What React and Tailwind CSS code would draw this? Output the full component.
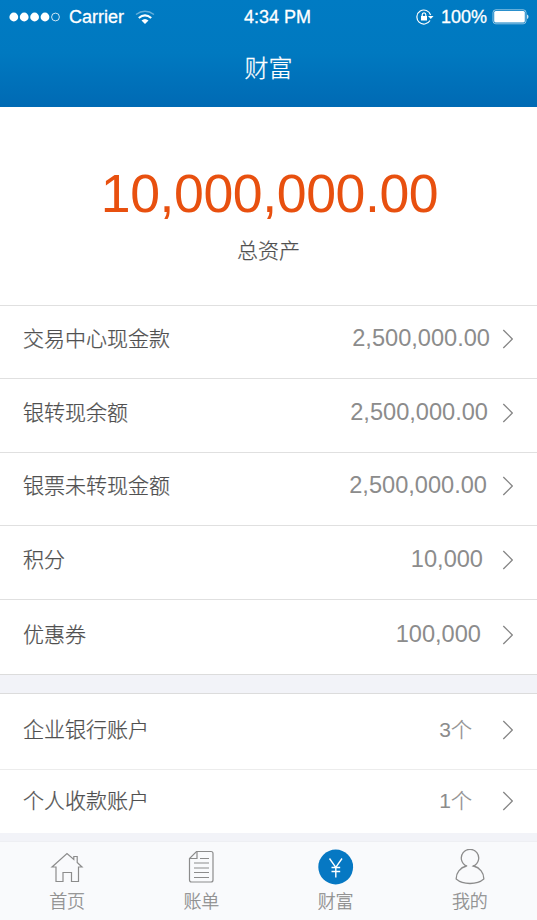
import React, { useState } from "react";

const assets = [
  { label: "交易中心现金款", value: "2,500,000.00", row: "h-[73px] pb-[7px]", gap: "mr-[12px]" },
  { label: "银转现余额", value: "2,500,000.00", row: "h-[74px] pb-[5px]", gap: "mr-[14px]" },
  { label: "银票未转现金额", value: "2,500,000.00", row: "h-[73px] pb-[6px]", gap: "mr-[15px]" },
  { label: "积分", value: "10,000", row: "h-[74px] pb-[6px]", gap: "mr-[19px]" },
  { label: "优惠券", value: "100,000", row: "h-[75px] pb-[4px]", gap: "mr-[21px]" },
];

const accounts = [
  { label: "企业银行账户", value: "3", row: "h-[76px] pb-[4px]" },
  { label: "个人收款账户", value: "1", row: "h-[64px] pb-[1px]" },
];

const Chevron = () => (
  <svg width="11" height="20" viewBox="0 0 11 20" fill="none" stroke="#858585" strokeWidth="1.3">
    <path d="M1.300 1 10.300 10 1.300 19" />
  </svg>
);

const HomeIcon = () => (
  <svg width="36" height="36" viewBox="0 0 36 36" fill="none" stroke="#8c8c8c" strokeWidth="1.2">
    <path d="M3 18 18 4.500l6.800 6V7.500h3.400v6L33 18h-3.500v14.500h-7v-9H14v9H7V18Z" />
  </svg>
);

const BillIcon = () => (
  <svg width="36" height="36" viewBox="0 0 36 36" fill="none" stroke="#8c8c8c" strokeWidth="1.2">
    <path d="M13.500 2.500H28q2 0 2 2v26.500q0 2-2 2H8.500q-2 0-2-2V9.500Z" />
    <path d="M14 3v6.500H6.500M17 9.500h9M11 14h15M11 19h15M11 23.500h15M11 28.500h15" />
  </svg>
);

const WealthIcon = () => (
  <svg width="36" height="36" viewBox="0 0 36 36" fill="none" stroke="#fff" strokeWidth="1.4">
    <circle cx="17.700" cy="18" r="17.400" fill="#0678c3" stroke="none" />
    <path d="M11.500 9.500 17.800 18.300l6.200-8.800M17.800 18v10.500M13.500 18.500h8.700M13.500 22.500h8.700" />
  </svg>
);

const UserIcon = () => (
  <svg width="36" height="36" viewBox="0 0 36 36" fill="none" stroke="#8c8c8c" strokeWidth="1.3">
    <path d="M14.500 17a8.700 8.700 0 1 1 7 0C28 18.500 32 24 31.800 30 25 36 11 36 4.200 30 4 24 8 18.500 14.500 17" />
    <path d="M12.700 16.800h2.500M20.800 16.800h2.500" />
  </svg>
);

const tabs = [
  { name: "首页", icon: <HomeIcon /> },
  { name: "账单", icon: <BillIcon /> },
  { name: "财富", icon: <WealthIcon /> },
  { name: "我的", icon: <UserIcon /> },
];

const StatusBar = () => (
  <div className="grid h-8 grid-cols-3 items-center pl-[9px] pr-[8px] pt-px text-[18px] leading-8">
    <div className="flex items-center">
      <svg width="52" height="10" viewBox="0 0 52 10" fill="#fff">
        <circle cx="4.800" cy="5" r="4.400" />
        <circle cx="15.200" cy="5" r="4.400" />
        <circle cx="25.600" cy="5" r="4.400" />
        <circle cx="36" cy="5" r="4.400" />
        <circle cx="46.500" cy="5" r="3.900" fill="none" stroke="#fff" strokeWidth=".8" />
      </svg>
      <span className="ml-[8px] [-webkit-text-stroke:0.3px_white]">Carrier</span>
      <svg className="ml-[11px]" width="20" height="15" viewBox="0 0 20 15" fill="none" stroke="#fff" strokeWidth="2.2">
        <path d="M1 4.500Q10-2 19 4.500" opacity=".4" strokeWidth="1.500" />
        <path d="M3.800 8q6.200-5.200 12.400 0" />
        <path d="M6.500 10.500q3.500-3 7 0L10 14Z" fill="#fff" stroke="none" />
      </svg>
    </div>
    <span className="pl-[17px] text-center [-webkit-text-stroke:0.3px_white]">4:34 PM</span>
    <div className="flex items-center justify-end">
      <svg width="18" height="16" viewBox="0 0 18 16" fill="none" stroke="#fff" strokeWidth="1.200">
        <path d="M14 11.500a7 7 0 1 1 .6-5.500" />
        <path d="M12 7h5.500l-2.700 3Z" fill="#fff" stroke="none" />
        <path d="M5 7h6v4.500H5Z" fill="#fff" stroke="none" />
        <path d="M6.200 7.500V5.700q0-1.900 1.800-1.900t1.800 1.900v1.800" />
      </svg>
      <span className="ml-[7px] [-webkit-text-stroke:0.3px_white]">100%</span>
      <svg className="ml-[5px]" width="37" height="16" viewBox="0 0 37 16">
        <rect x="1" y=".8" width="33" height="14" rx="2.800" fill="none" stroke="#fff" strokeWidth=".7" opacity=".8" />
        <rect x="2.200" y="2" width="30.600" height="11.600" rx="1.500" fill="#fff" />
        <path d="M35 5.500q1.500.5 1.500 2.300T35 10Z" fill="#fff" opacity=".8" />
      </svg>
    </div>
  </div>
);

const App = () => {
  const [active, setActive] = useState("财富");

  return (
    <div className="flex h-[920px] w-full flex-col overflow-hidden bg-[#f2f3f8] font-['Liberation_Sans','Noto_Sans_CJK_SC',sans-serif] font-light text-[#505050]">
      {/* Header */}
      <header className="h-[107px] bg-gradient-to-b from-[#007bc3] via-[#0079c0] to-[#006ab4] text-white">
        <StatusBar />
        <h1 className="pt-[19px] text-center text-[24px] leading-9 [-webkit-text-stroke:0.25px_white]">财富</h1>
      </header>

      {/* Total */}
      <section className="flex h-[198px] flex-col items-center bg-white pt-[55px]">
        <div className="pl-[2px] text-[53.600px] leading-[62px] tracking-[-0.4px] text-[#e8500f]">10,000,000.00</div>
        <div className="mt-[11px] text-[21px] leading-8 [-webkit-text-stroke:0.25px_#505050]">总资产</div>
      </section>

      {/* Assets */}
      <section className="border-b border-[#dcdcdc] bg-white">
        {assets.map((item) => (
          <div
            key={item.label}
            className={`flex items-center border-t border-[#e0e0e0] pl-[23px] pr-[24px] ${item.row}`}
          >
            <span className="flex-1 text-[21px] leading-8 [-webkit-text-stroke:0.25px_#505050]">{item.label}</span>
            <span className={`pb-[2px] text-[23.600px] leading-8 text-[#8c8c8c] ${item.gap}`}>{item.value}</span>
            <Chevron />
          </div>
        ))}
      </section>

      {/* Bank accounts */}
      <section className="mt-[18px] bg-white">
        {accounts.map((item, i) => (
          <div
            key={item.label}
            className={`flex items-center border-t pl-[23px] pr-[24px] ${item.row} ${
              i === 0 ? "border-[#dcdcdc]" : "border-[#ececec]"
            }`}
          >
            <span className="flex-1 text-[21px] leading-8 [-webkit-text-stroke:0.25px_#505050]">{item.label}</span>
            <span className="mr-[30px] text-[21px] leading-8 text-[#8c8c8c]">
              {item.value}
              <span className="[-webkit-text-stroke:0.25px_#8c8c8c]">个</span>
            </span>
            <Chevron />
          </div>
        ))}
      </section>

      {/* Tab bar */}
      <nav className="mt-[8px] grid flex-1 grid-cols-4 border-t border-[#eeeff3] bg-[#f9fafc]">
        {tabs.map((tab) => (
          <button
            key={tab.name}
            onClick={() => setActive(tab.name)}
            aria-current={active === tab.name}
            className="flex flex-col items-center pt-[7px] text-[18px] text-[#8c8c8c]"
          >
            {tab.icon}
            <span className="mt-[4px] leading-[26px] [-webkit-text-stroke:0.25px_#8c8c8c]">{tab.name}</span>
          </button>
        ))}
      </nav>
    </div>
  );
};

export default App;
